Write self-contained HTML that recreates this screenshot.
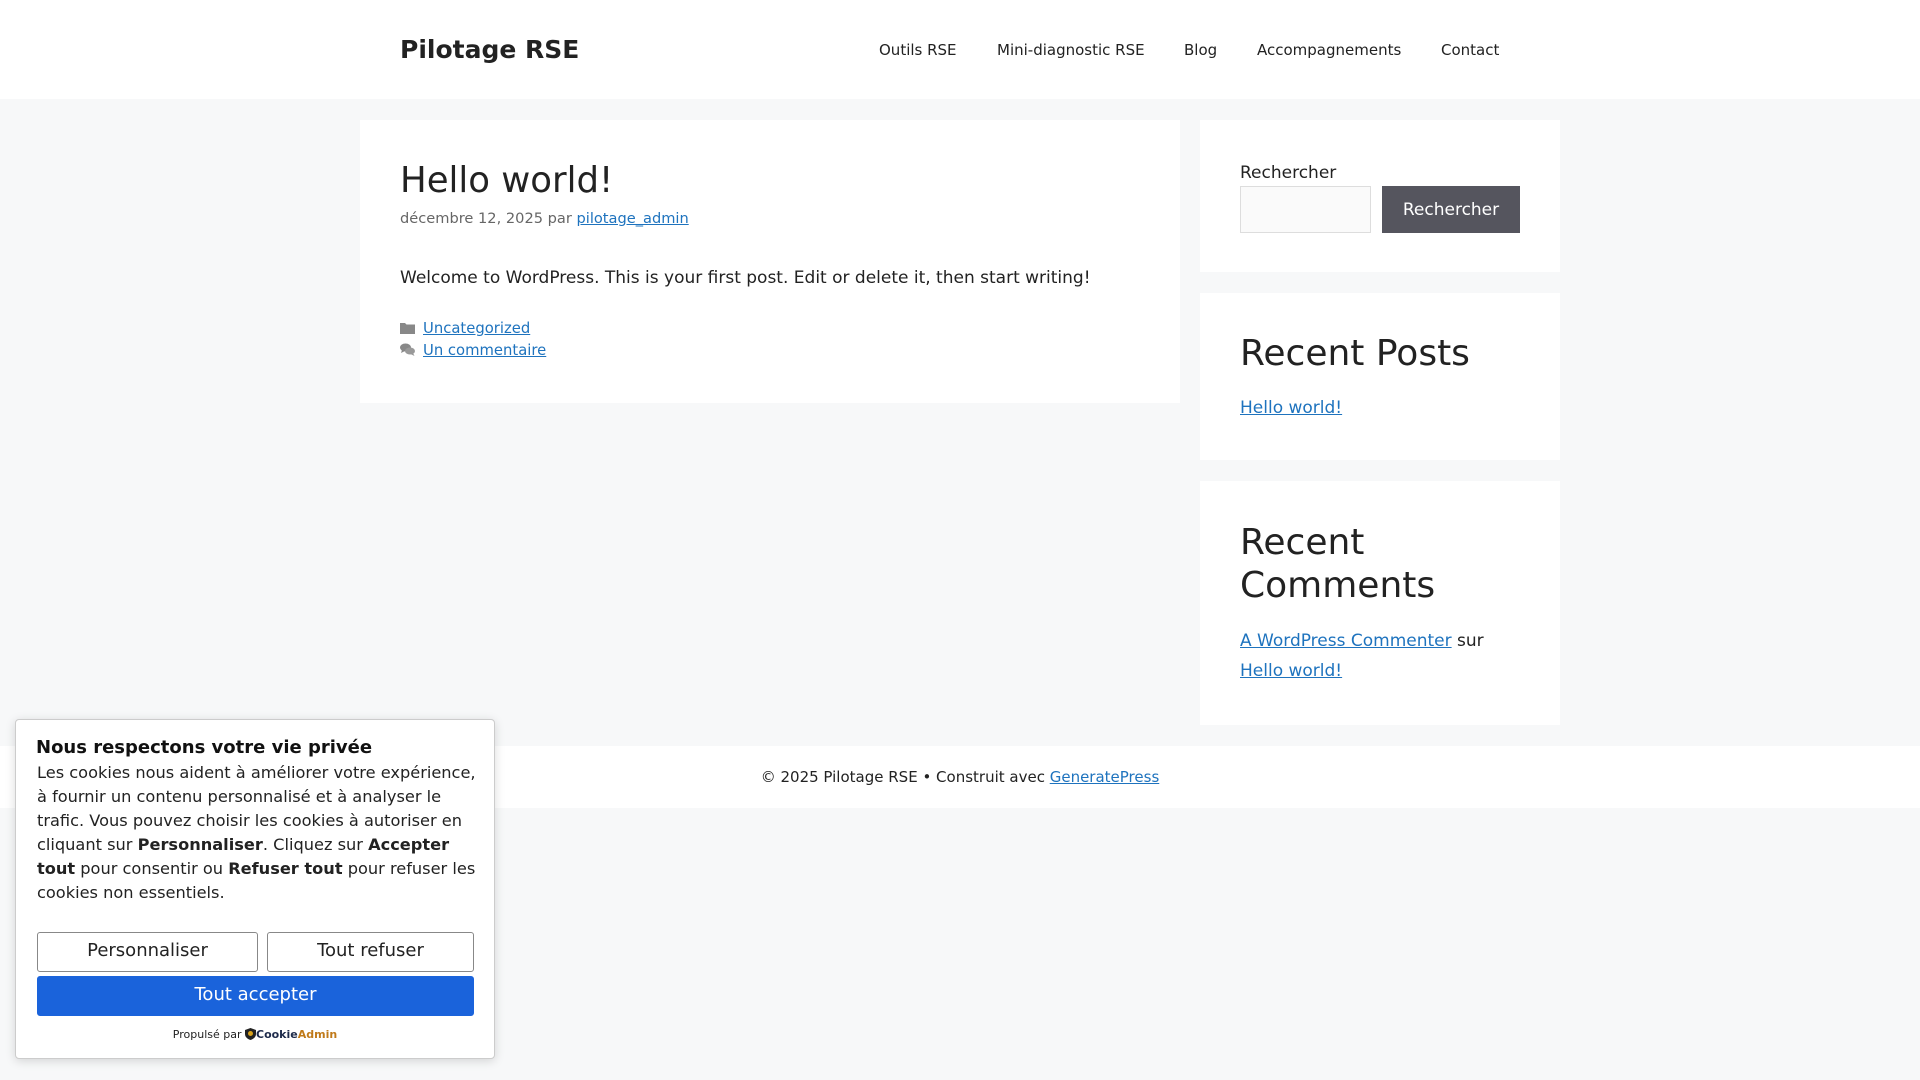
<!DOCTYPE html>
<html><head><meta charset="utf-8"><style>
*{box-sizing:border-box;margin:0;padding:0}
body{width:1920px;height:1080px;background:#f7f8f9;font-family:"DejaVu Sans","Liberation Sans",sans-serif;color:#222;position:relative;overflow:hidden}
a{color:#1e73be}
.hdr{position:absolute;left:0;top:0;width:1920px;height:99px;background:#fff}
.logo{position:absolute;left:400px;top:35px;font-size:25px;font-weight:bold;color:#222}
.nav{position:absolute;top:41px;font-size:15px;color:#222}
.box{position:absolute;background:#fff}
.ft{position:absolute;left:0;top:746px;width:1920px;height:62px;background:#fff;text-align:center;font-size:15px;line-height:62px;color:#222}
.ck{position:absolute;left:15px;top:719px;width:480px;height:340px;background:#fff;border:1px solid #ccc;border-radius:4px;box-shadow:0 2px 10px rgba(0,0,0,.15)}
.btn{position:absolute;border:1px solid #888;border-radius:3px;background:#fff;text-align:center;font-size:18px;line-height:36px;color:#222}
</style></head><body>
<div class="hdr">
<div class="logo">Pilotage RSE</div>
<div class="nav" style="left:879px">Outils RSE</div>
<div class="nav" style="left:997px">Mini-diagnostic RSE</div>
<div class="nav" style="left:1184px">Blog</div>
<div class="nav" style="left:1257px">Accompagnements</div>
<div class="nav" style="left:1441px">Contact</div>
</div>

<div class="box" style="left:360px;top:120px;width:820px;height:283px">
<div style="position:absolute;left:40px;top:40px;font-size:35.5px">Hello world!</div>
<div style="position:absolute;left:40px;top:90px;font-size:14.6px;color:#666">décembre 12, 2025 par <a href="#">pilotage_admin</a></div>
<div style="position:absolute;left:40px;top:148px;font-size:17px">Welcome to WordPress. This is your first post. Edit or delete it, then start writing!</div>
<div style="position:absolute;left:40px;top:198px;font-size:14.8px;line-height:22px">
<div><svg width="15" height="12" viewBox="0 0 15 12" style="vertical-align:-1px;margin-right:8px"><path d="M0 1h5l1.5 1.5H15V12H0z" fill="#888"/></svg><a href="#">Uncategorized</a></div>
<div><svg width="15" height="13" viewBox="0 0 15 13" style="vertical-align:-1px;margin-right:8px"><ellipse cx="5.5" cy="4.5" rx="5.5" ry="4" fill="#888"/><path d="M2 7l-1 3 4-2z" fill="#888"/><ellipse cx="10" cy="8" rx="5" ry="3.5" fill="#999"/><path d="M13 10l1.5 3-4-2z" fill="#999"/></svg><a href="#">Un commentaire</a></div>
</div>
</div>

<div class="box" style="left:1200px;top:120px;width:360px;height:152px">
<div style="position:absolute;left:40px;top:43px;font-size:17px">Rechercher</div>
<div style="position:absolute;left:40px;top:66px;width:131px;height:47px;background:#fafafa;border:1px solid #ddd"></div>
<div style="position:absolute;left:182px;top:66px;width:138px;height:47px;background:#55555e;color:#fff;font-size:17px;line-height:49px;text-align:center">Rechercher</div>
</div>

<div class="box" style="left:1200px;top:293px;width:360px;height:167px">
<div style="position:absolute;left:40px;top:40px;font-size:36px">Recent Posts</div>
<div style="position:absolute;left:40px;top:105px;font-size:17px"><a href="#">Hello world!</a></div>
</div>

<div class="box" style="left:1200px;top:481px;width:360px;height:244px">
<div style="position:absolute;left:40px;top:40px;font-size:36px;line-height:43px">Recent<br>Comments</div>
<div style="position:absolute;left:40px;top:145px;font-size:17px;line-height:30px"><a href="#">A WordPress Commenter</a> sur<br><a href="#">Hello world!</a></div>
</div>

<div class="ft">© 2025 Pilotage RSE • Construit avec <a href="#">GeneratePress</a></div>

<div class="ck">
<div style="position:absolute;left:20px;top:17px;font-size:18px;font-weight:bold;color:#111">Nous respectons votre vie privée</div>
<div style="position:absolute;left:21px;top:41px;width:450px;font-size:16.2px;line-height:24px;color:#222">Les cookies nous aident à améliorer votre expérience, à fournir un contenu personnalisé et à analyser le trafic. Vous pouvez choisir les cookies à autoriser en cliquant sur <b>Personnaliser</b>. Cliquez sur <b>Accepter tout</b> pour consentir ou <b>Refuser tout</b> pour refuser les cookies non essentiels.</div>
<div class="btn" style="left:21px;top:212px;width:221px;height:40px">Personnaliser</div>
<div class="btn" style="left:251px;top:212px;width:207px;height:40px">Tout refuser</div>
<div class="btn" style="left:21px;top:256px;width:437px;height:40px;background:#1a63db;border-color:#1a63db;color:#fff">Tout accepter</div>
<div style="position:absolute;left:0;width:100%;top:308px;text-align:center;font-size:11px;color:#222">Propulsé par <svg width="11" height="12" viewBox="0 0 11 12" style="vertical-align:-2px"><path d="M5.5 0L11 2v4c0 3-2.5 5-5.5 6C2.5 11 0 9 0 6V2z" fill="#222"/><circle cx="5.5" cy="5.5" r="2.5" fill="#d9a21b"/></svg><b style="color:#1d2a4a">Cookie</b><b style="color:#c07a1a">Admin</b></div>
</div>
</body></html>
